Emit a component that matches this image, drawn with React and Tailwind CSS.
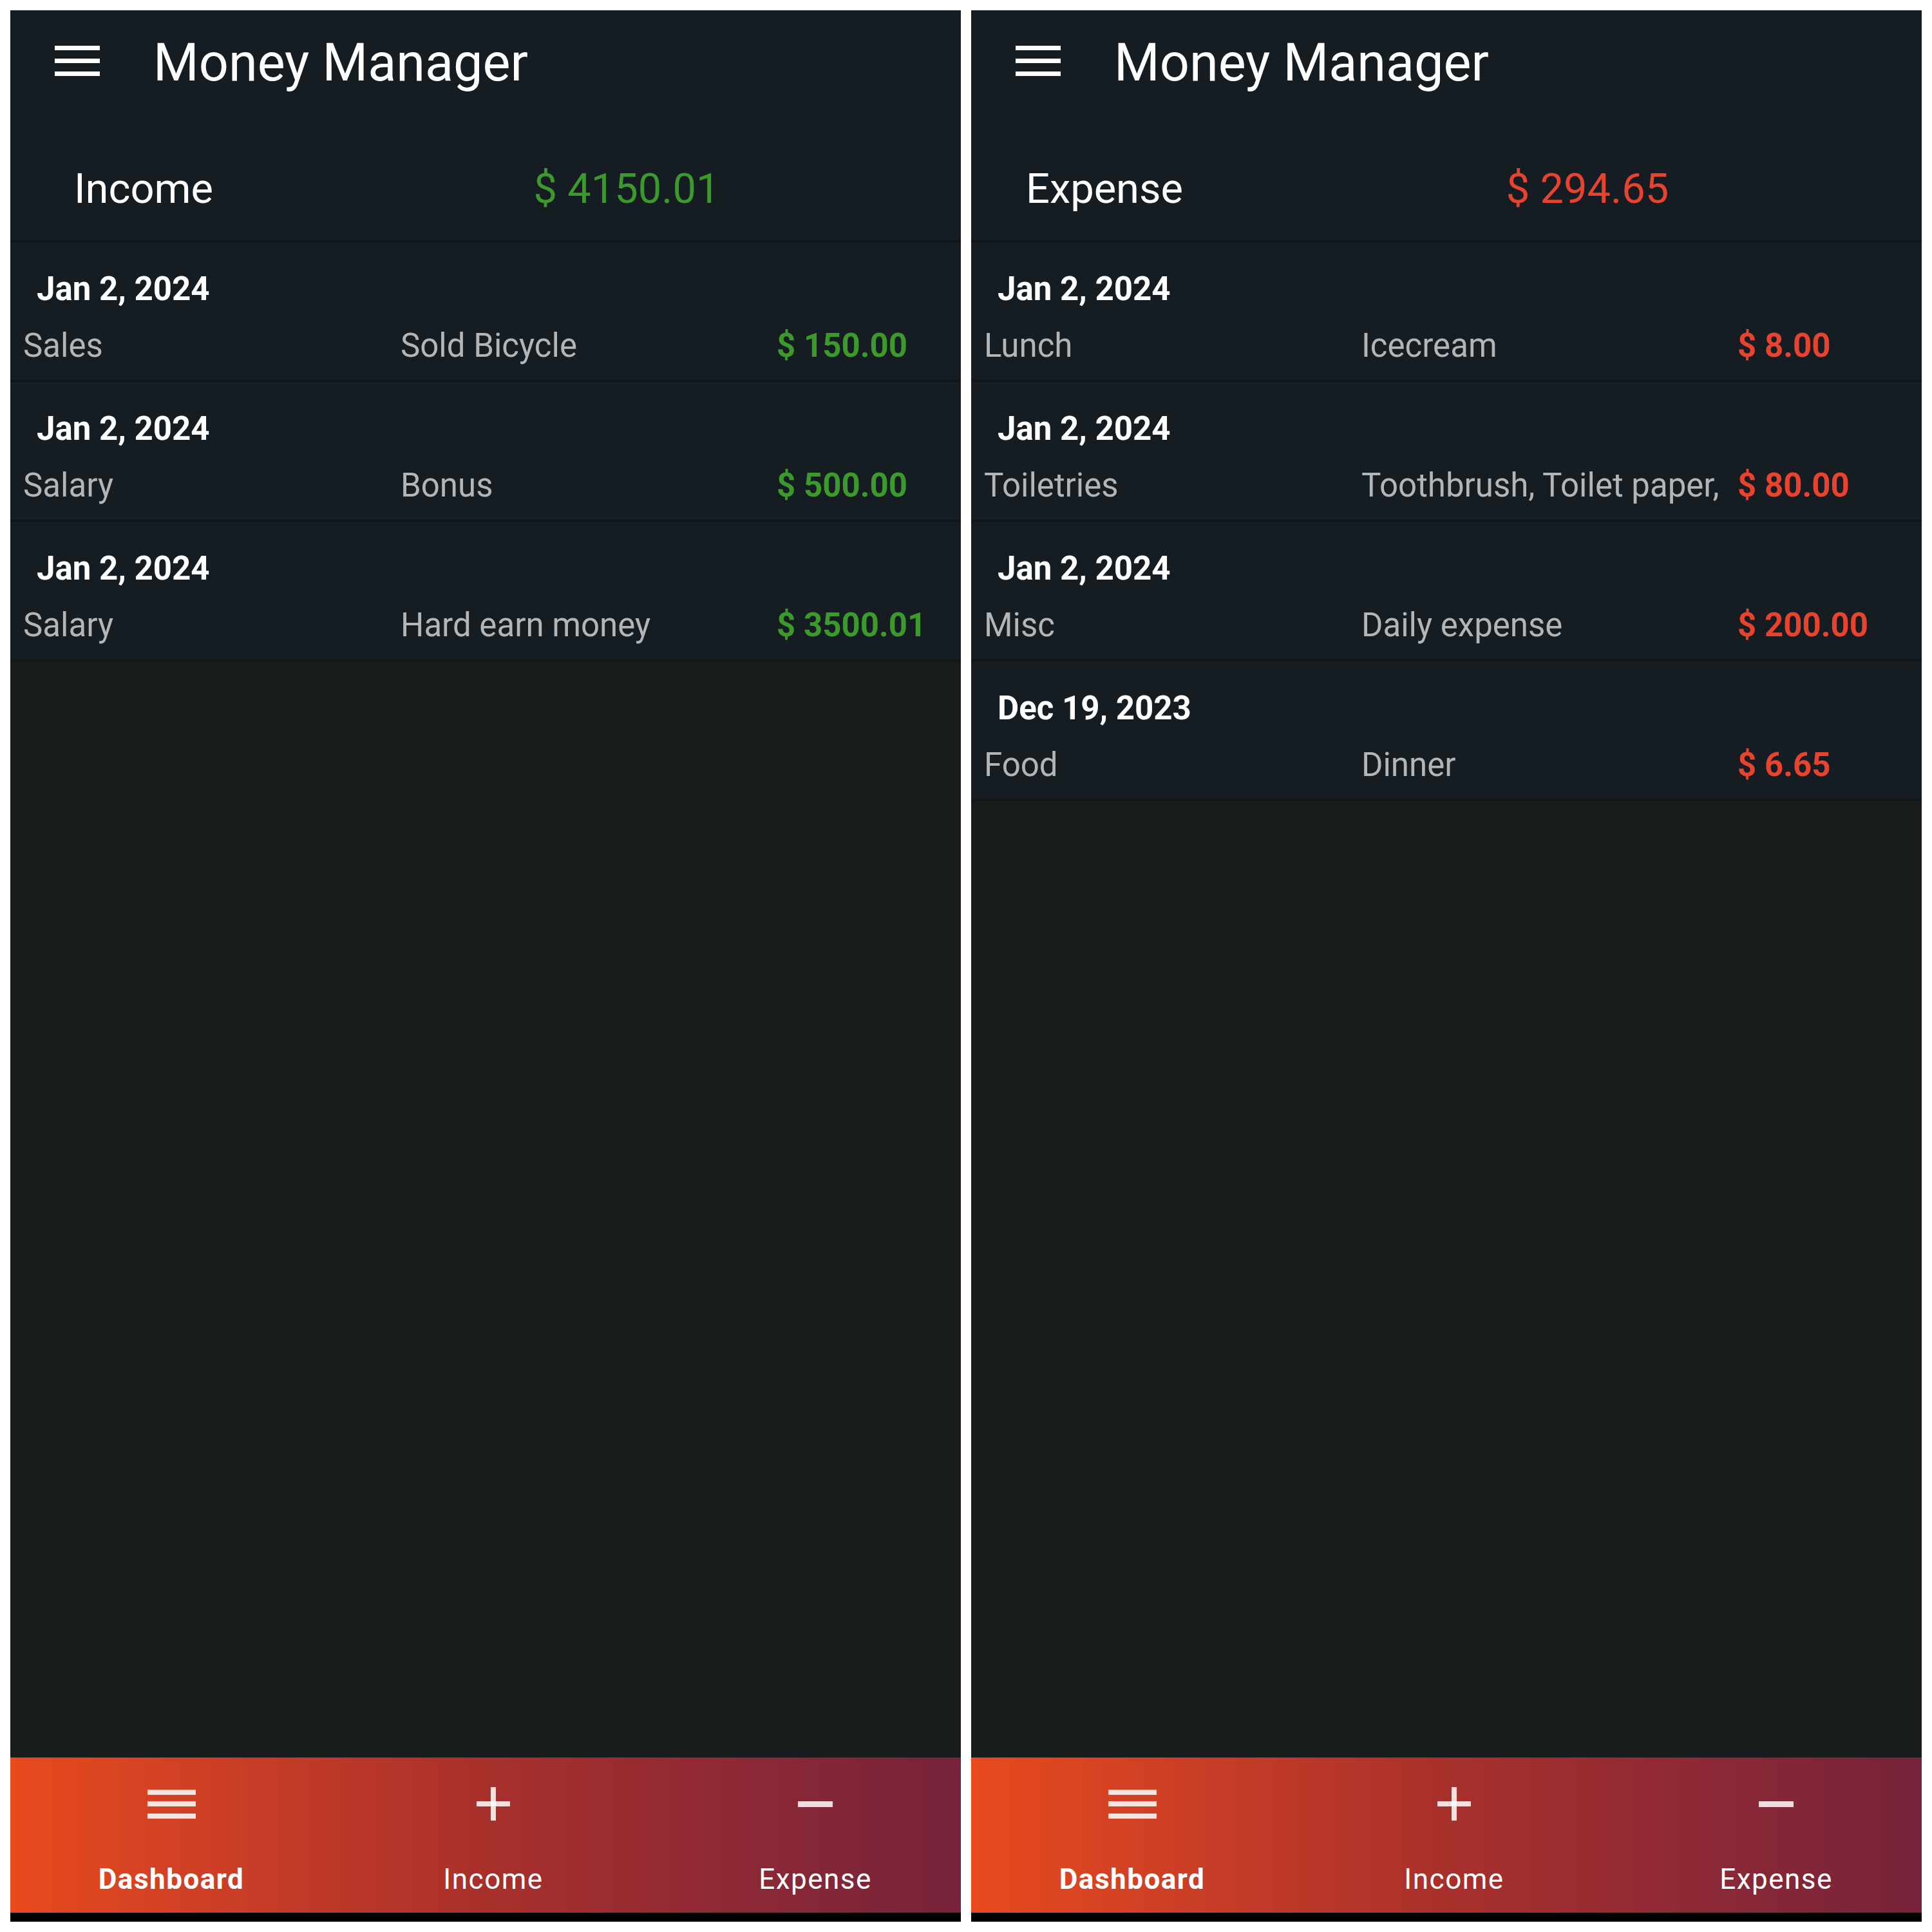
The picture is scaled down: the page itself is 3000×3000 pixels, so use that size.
import React from "react";

const income = {
  label: "Income",
  total: "$ 4150.01",
  color: "text-[#3b9a2b]",
  rows: [
    { date: "Jan 2, 2024", cat: "Sales", desc: "Sold Bicycle", amt: "$ 150.00" },
    { date: "Jan 2, 2024", cat: "Salary", desc: "Bonus", amt: "$ 500.00" },
    { date: "Jan 2, 2024", cat: "Salary", desc: "Hard earn money", amt: "$ 3500.01" },
  ],
};

const expense = {
  label: "Expense",
  total: "$ 294.65",
  color: "text-[#e8432f]",
  rows: [
    { date: "Jan 2, 2024", cat: "Lunch", desc: "Icecream", amt: "$ 8.00" },
    { date: "Jan 2, 2024", cat: "Toiletries", desc: "Toothbrush, Toilet paper,", amt: "$ 80.00" },
    { date: "Jan 2, 2024", cat: "Misc", desc: "Daily expense", amt: "$ 200.00" },
    { date: "Dec 19, 2023", cat: "Food", desc: "Dinner", amt: "$ 6.65" },
  ],
};

function Hamburger() {
  return (
    <div className="flex flex-col gap-[13px] w-[70px]">
      <div className="h-[7px] bg-white" />
      <div className="h-[7px] bg-white" />
      <div className="h-[7px] bg-white" />
    </div>
  );
}

function NavItem({ icon, label, bold }) {
  return (
    <div className="w-[500px] shrink-0 flex flex-col items-center">
      <div className="h-[146px] flex items-center justify-center pb-[2px]">{icon}</div>
      <div
        className={`mt-[17px] text-[44px] leading-[52px] tracking-[1.5px] text-white ${bold ? "font-bold" : "font-normal"}`}
      >
        {label}
      </div>
    </div>
  );
}

function Panel({ data }) {
  return (
    <div className="w-[1476px] h-[2968px] flex flex-col overflow-hidden bg-[#181b1c]">
      <div className="h-[193px] bg-[#161d22] flex items-start pt-[38px] pl-[69px]">
        <div className="h-[80px] flex items-center">
          <Hamburger />
        </div>
        <div className="ml-[83px] mt-[4px] text-[81px] leading-[80px] text-white">Money Manager</div>
      </div>
      <div className="h-[164px] bg-[#161d22] flex items-center pt-[4px]">
        <div className="w-[414px] text-center text-[65px] leading-[76px] text-white">{data.label}</div>
        <div className={`w-[600px] ml-[243px] text-center text-[65px] leading-[76px] ${data.color}`}>
          {data.total}
        </div>
      </div>
      {data.rows.map((r, i) => (
        <div key={i} className="border-t-[3px] border-[#111517] bg-[#161d22] h-[217px] pt-[41px]">
          <div className="pl-[41px] h-[64px] flex items-center text-[51px] font-bold text-white">
            {r.date}
          </div>
          <div className="mt-[24px] h-[64px] flex items-center text-[51px]">
            <div className="w-[606px] shrink-0 pl-[20px] text-[#b3b5b7]">{r.cat}</div>
            <div className="w-[584px] shrink-0 text-[#b3b5b7] whitespace-nowrap">{r.desc}</div>
            <div className={`font-bold whitespace-nowrap ${data.color}`}>{r.amt}</div>
          </div>
        </div>
      ))}
      <div className="border-t-[3px] border-[#131718]" />
      <div className="flex-1" />
      <div className="h-[241px] bg-gradient-to-r from-[#e84a1c] via-[#a8302b] to-[#76223a] flex">
        <NavItem
          bold
          label="Dashboard"
          icon={
            <div className="flex flex-col gap-[10.5px] w-[75px]">
              <div className="h-[8px] bg-white/85" />
              <div className="h-[8px] bg-white/85" />
              <div className="h-[8px] bg-white/85" />
            </div>
          }
        />
        <NavItem
          label="Income"
          icon={
            <svg width="52" height="52" viewBox="0 0 52 52">
              <rect x="22" y="0" width="8" height="52" fill="rgba(255,255,255,0.85)" />
              <rect x="0" y="22" width="52" height="8" fill="rgba(255,255,255,0.85)" />
            </svg>
          }
        />
        <NavItem
          label="Expense"
          icon={
            <svg width="54" height="52" viewBox="0 0 54 52">
              <rect x="0" y="22" width="54" height="9" fill="rgba(255,255,255,0.85)" />
            </svg>
          }
        />
      </div>
      <div className="h-[14px] bg-black" />
    </div>
  );
}

export default function App() {
  return (
    <div
      className="w-[3000px] h-[3000px] bg-white flex gap-[16px] p-[16px]"
      style={{ fontFamily: "Roboto, 'Noto Sans', sans-serif" }}
    >
      <Panel data={income} />
      <Panel data={expense} />
    </div>
  );
}
